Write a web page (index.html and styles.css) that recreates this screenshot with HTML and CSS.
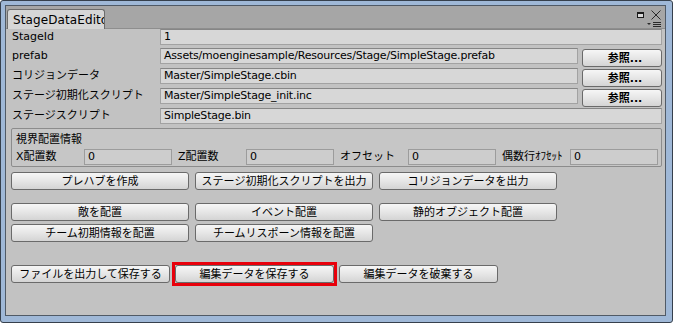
FILE: index.html
```html
<!DOCTYPE html>
<html>
<head>
<meta charset="utf-8">
<link rel="stylesheet" href="styles.css">
</head>
<body>
<div class="frame">
  <div class="window">
    <div class="tabbar">
      <div class="tab"><span class="tab-text">StageDataEditor</span></div>
      <div class="winctl">
        <svg class="ico-max" width="7" height="6" viewBox="0 0 7 6"><rect x="0.5" y="0.5" width="6" height="5" fill="#d8d8d8" stroke="#1a1a1a"/><rect x="0" y="0" width="7" height="2" fill="#1a1a1a"/></svg>
        <svg class="ico-close" width="10" height="10" viewBox="0 0 10 10"><path d="M0.5 0.5 L9.5 9.5 M9.5 0.5 L0.5 9.5" stroke="#2a2a2a" stroke-width="1" fill="none"/></svg>
        <svg class="ico-menu" width="15" height="6" viewBox="0 0 15 6"><path d="M0 1 H4 L2 3 Z" fill="#2a2a2a"/><path d="M6 0.5 H14 M6 2.5 H14 M6 4.5 H14" stroke="#2a2a2a" stroke-width="1"/></svg>
      </div>
    </div>
    <div class="content">
      <div class="row first">
        <span class="label">StageId</span>
        <span class="field">1</span>
      </div>
      <div class="row">
        <span class="label">prefab</span>
        <span class="field">Assets/moenginesample/Resources/Stage/SimpleStage.prefab</span>
        <span class="btn ref">参照...</span>
      </div>
      <div class="row">
        <span class="label">コリジョンデータ</span>
        <span class="field">Master/SimpleStage.cbin</span>
        <span class="btn ref">参照...</span>
      </div>
      <div class="row">
        <span class="label">ステージ初期化スクリプト</span>
        <span class="field">Master/SimpleStage_init.inc</span>
        <span class="btn ref">参照...</span>
      </div>
      <div class="row">
        <span class="label">ステージスクリプト</span>
        <span class="field">SimpleStage.bin</span>
      </div>

      <div class="group">
        <div class="gtitle">視界配置情報</div>
        <div class="grow">
          <div class="gcell"><span class="glabel">X配置数</span><span class="gfield">0</span></div>
          <div class="gcell"><span class="glabel">Z配置数</span><span class="gfield">0</span></div>
          <div class="gcell"><span class="glabel">オフセット</span><span class="gfield">0</span></div>
          <div class="gcell"><span class="glabel">偶数行ｵﾌｾｯﾄ</span><span class="gfield">0</span></div>
        </div>
      </div>

      <div class="brow b1">
        <span class="btn wide">プレハブを作成</span>
        <span class="btn wide">ステージ初期化スクリプトを出力</span>
        <span class="btn wide">コリジョンデータを出力</span>
      </div>
      <div class="brow b2">
        <span class="btn wide">敵を配置</span>
        <span class="btn wide">イベント配置</span>
        <span class="btn wide">静的オブジェクト配置</span>
      </div>
      <div class="brow b3">
        <span class="btn wide">チーム初期情報を配置</span>
        <span class="btn wide">チームリスポーン情報を配置</span>
      </div>
      <div class="brow b4">
        <span class="btn narrow">ファイルを出力して保存する</span>
        <span class="hlwrap"><span class="btn narrow">編集データを保存する</span></span>
        <span class="btn narrow">編集データを破棄する</span>
      </div>
    </div>
  </div>
</div>
</body>
</html>
```

FILE: styles.css
```css
* { box-sizing: border-box; }
html, body { margin: 0; padding: 0; }
body {
  width: 673px;
  height: 323px;
  overflow: hidden;
  font-family: "DejaVu Sans", "Noto Sans CJK JP", sans-serif;
  font-size: 11px;
  color: #000;
}
.frame {
  width: 673px;
  height: 323px;
  border: 1px solid #36404c;
  border-radius: 3px;
  background: #9fb8d7;
  padding: 4px 6px 6px 4px;
}
.window {
  width: 100%;
  height: 100%;
  border: 1px solid #505a66;
  background: #c2c2c2;
  display: flex;
  flex-direction: column;
}
.tabbar {
  position: relative;
  height: 23px;
  flex: none;
  background: #a6a6a6;
  border-bottom: 1px solid #8e8e8e;
  padding: 3px 0 0 1px;
}
.tab {
  width: 98px;
  height: 20px;
  background: #d6d6d6;
  border: 1px solid #6c6c6c;
  border-bottom: none;
  border-radius: 3px 3px 0 0;
  overflow: hidden;
  white-space: nowrap;
  padding: 2px 0 0 5px;
  line-height: 16px;
  font-size: 12px;
  letter-spacing: 0.1px;
}
.winctl { position: absolute; inset: 0; }
.ico-max { position: absolute; left: 631px; top: 6px; }
.ico-close { position: absolute; left: 645px; top: 4px; }
.ico-menu { position: absolute; left: 641px; top: 16px; }

.content {
  flex: 1;
  padding: 0 3px 0 6px;
}
.row {
  display: flex;
  align-items: flex-start;
  height: 20px;
}
.row.first { height: 19px; }
.label {
  width: 148px;
  flex: none;
  height: 16px;
  line-height: 16px;
  white-space: nowrap;
}
.field {
  flex: 1;
  height: 16px;
  line-height: 14px;
  background: #d7d7d7;
  border: 1px solid #a2a2a2;
  border-top-color: #868686;
  padding-left: 3px;
  white-space: nowrap;
  overflow: hidden;
  letter-spacing: -0.2px;
}
.btn {
  display: flex;
  align-items: center;
  justify-content: center;
  height: 18px;
  border: 1px solid #6a6a6a;
  border-radius: 3px;
  background: linear-gradient(#f6f6f6, #e6e6e6 50%, #d4d4d4);
  white-space: nowrap;
  font-size: 11px;
  line-height: 16px;
  padding-top: 1px;
}
.btn.ref {
  width: 80px;
  margin: 1px 0 0 4px;
  font-weight: bold;
  padding-left: 6px;
}

.group {
  margin: 0 0 0 -1px;
  width: 651px;
  height: 39px;
  border: 1px solid #8c8c8c;
  border-radius: 2px;
  background: #c6c6c6;
  padding: 0 0 0 4px;
}
.gtitle {
  height: 20px;
  line-height: 21px;
}
.grow {
  display: flex;
  gap: 6px;
}
.gcell {
  display: flex;
  width: 156px;
}
.glabel {
  width: 68px;
  flex: none;
  height: 16px;
  line-height: 16px;
  white-space: nowrap;
}
.gfield {
  width: 88px;
  height: 16px;
  line-height: 14px;
  background: #cdcdcd;
  border: 1px solid #9c9c9c;
  padding-left: 3px;
}

.brow {
  display: flex;
  margin-left: -1px;
  gap: 6px;
}
.b1 { margin-top: 5px; }
.b2 { margin-top: 13px; }
.b3 { margin-top: 3px; }
.b4 { margin-top: 23px; gap: 5px; }
.btn.wide { width: 178px; }
.btn.narrow { width: 159px; }
.hlwrap {
  display: block;
  border: 3px solid #e8000b;
  margin: -3px;
}
```
